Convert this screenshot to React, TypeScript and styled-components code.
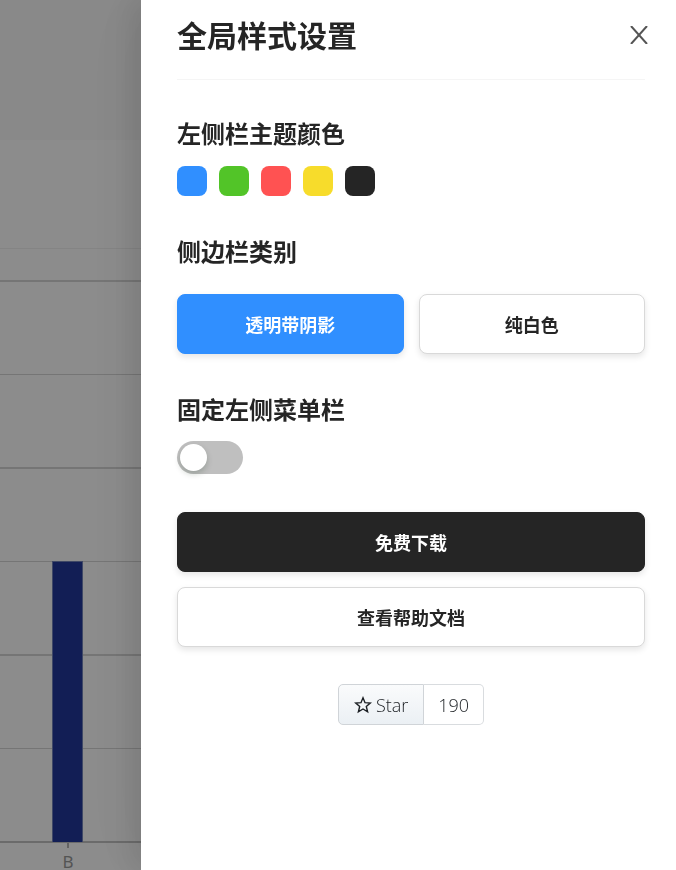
import React, { useState } from "react";
import styled, { createGlobalStyle } from "styled-components";

const GlobalStyle = createGlobalStyle`
  *, *::before, *::after { box-sizing: border-box; }
  body {
    margin: 0;
    background: #fafafa;
    color: #252525;
    font-family: "Open Sans", "Noto Sans CJK SC", sans-serif;
  }
  button { font-family: inherit; cursor: pointer; }
`;

const Page = styled.main`
  height: 100vh;
  padding-top: 140px;
  overflow: hidden;
`;

const ChartCard = styled.section`
  padding-top: 108px;
  background: #ffffff;
`;

const ChartArea = styled.div`
  border-top: 1px solid #f0f0f0;
`;

const Chart = styled.svg`
  display: block;
  width: 100%;
  height: 640px;
`;

const Mask = styled.div`
  position: fixed;
  inset: 0;
  display: flex;
  justify-content: flex-end;
  background: rgba(0, 0, 0, 0.45);
`;

const Drawer = styled.aside`
  position: relative;
  width: 535px;
  max-width: 100%;
  padding: 18px 31px 36px 36px;
  overflow: auto;
  background: #ffffff;
  box-shadow:
    -9px 0 24px rgba(0, 0, 0, 0.08),
    -14px 0 42px rgba(0, 0, 0, 0.05),
    -18px 0 72px rgba(0, 0, 0, 0.03);
`;

const DrawerHeader = styled.header`
  padding-bottom: 25px;
  margin-bottom: 36px;
  border-bottom: 1px solid #f5f5f5;
`;

const Title = styled.h1`
  margin: 0;
  font-size: 30px;
  line-height: 36px;
  font-weight: 700;
`;

const CloseButton = styled.button`
  position: absolute;
  top: 20px;
  right: 22px;
  display: grid;
  place-items: center;
  width: 30px;
  height: 30px;
  padding: 0;
  border: 0;
  background: none;
  color: #555555;
`;

const Section = styled.section`
  margin-bottom: 38px;
`;

const SectionTitle = styled.h2<{ $gap: number }>`
  margin: 0 0 ${(p) => p.$gap}px;
  font-size: 24px;
  line-height: 36px;
  font-weight: 700;
`;

const Swatches = styled.div`
  display: flex;
  gap: 12px;
`;

const Swatch = styled.button<{ $color: string }>`
  width: 30px;
  height: 30px;
  padding: 0;
  border: 0;
  border-radius: 8px;
  background: ${(p) => p.$color};
`;

const Choices = styled.div`
  display: grid;
  grid-template-columns: 1fr 1fr;
  gap: 15px;
`;

const Actions = styled.div`
  display: grid;
  gap: 15px;
  margin-bottom: 37px;
`;

type Tone = "primary" | "dark" | "outline";

const tones: Record<Tone, { bg: string; fg: string; line: string }> = {
  primary: { bg: "#308fff", fg: "#ffffff", line: "#308fff" },
  dark: { bg: "#252525", fg: "#ffffff", line: "#252525" },
  outline: { bg: "#ffffff", fg: "#252525", line: "#d9d9d9" },
};

const ActionButton = styled.button<{ $tone: Tone }>`
  height: 60px;
  padding: 2px 16px 0;
  border: 1px solid ${(p) => tones[p.$tone].line};
  border-radius: 8px;
  background: ${(p) => tones[p.$tone].bg};
  color: ${(p) => tones[p.$tone].fg};
  font-size: 18px;
  line-height: 24px;
  font-weight: 700;
  box-shadow: 0 3px 6px rgba(0, 0, 0, 0.1);
`;

const Switch = styled.input`
  appearance: none;
  display: block;
  width: 66px;
  height: 33px;
  margin: 0;
  padding: 3px;
  border-radius: 17px;
  background: #bfbfbf;
  cursor: pointer;

  &::before {
    content: "";
    display: block;
    width: 27px;
    height: 27px;
    border-radius: 50%;
    background: #ffffff;
    box-shadow: 0 3px 6px rgba(0, 35, 11, 0.2);
  }
  &:checked { background: #308fff; }
  &:checked::before { margin-left: auto; }
`;

const StarRow = styled.div`
  display: flex;
  justify-content: center;
`;

const StarLink = styled.a`
  display: flex;
  align-items: center;
  gap: 4px;
  height: 41px;
  padding: 0 15px;
  border: 1px solid #d0d4d8;
  border-radius: 5px 0 0 5px;
  background: linear-gradient(#fafbfc, #ebf0f4);
  color: #1b1f23;
  font-size: 18px;
  font-weight: 300;
  text-decoration: none;
`;

const CountLink = styled(StarLink)`
  padding: 0 14px;
  border-color: #d9dcdf;
  border-left: 0;
  border-radius: 0 5px 5px 0;
  background: #ffffff;
`;

const gridLines = [
  { y: 32, width: 2 },
  { y: 125.5, width: 1 },
  { y: 219, width: 2 },
  { y: 312.5, width: 1 },
  { y: 406, width: 2 },
  { y: 499.5, width: 1 },
];

const swatches = [
  { name: "蓝色", color: "#308fff" },
  { name: "绿色", color: "#52c428" },
  { name: "红色", color: "#ff5252" },
  { name: "黄色", color: "#f7dc2b" },
  { name: "黑色", color: "#252525" },
];

function BarChart() {
  return (
    <Chart aria-label="B">
      {gridLines.map((l) => (
        <line key={l.y} x1="0" x2="100%" y1={l.y} y2={l.y} stroke="#d6d6d6" strokeWidth={l.width} />
      ))}
      <line x1="0" x2="100%" y1="593" y2="593" stroke="#c4c4c4" strokeWidth="2" />
      <rect x="52" y="312" width="31" height="281" fill="#7384bb" />
      <rect x="53" y="313" width="29" height="280" fill="#22389b" />
      <line x1="68" x2="68" y1="594" y2="599" stroke="#b4b4b4" strokeWidth="2" />
      <text x="68" y="619" textAnchor="middle" fontSize="17" fontFamily="Noto Sans" fill="#999999">B</text>
    </Chart>
  );
}

export default function App() {
  const [kind, setKind] = useState(0);
  const [fixed, setFixed] = useState(false);

  return (
    <>
      <GlobalStyle />
      <Page>
        <ChartCard>
          <ChartArea>
            <BarChart />
          </ChartArea>
        </ChartCard>
      </Page>
      <Mask>
        <Drawer>
          <DrawerHeader>
            <Title>全局样式设置</Title>
            <CloseButton aria-label="关闭">
              <svg width="18" height="18" viewBox="0 0 18 18" fill="none" stroke="currentColor" strokeWidth="2">
                <path d="M1 0L17 18M17 0L1 18" />
              </svg>
            </CloseButton>
          </DrawerHeader>

          <Section>
            <SectionTitle $gap={14}>左侧栏主题颜色</SectionTitle>
            <Swatches>
              {swatches.map((s) => (
                <Swatch key={s.color} $color={s.color} aria-label={s.name} />
              ))}
            </Swatches>
          </Section>

          <Section>
            <SectionTitle $gap={24}>侧边栏类别</SectionTitle>
            <Choices>
              {["透明带阴影", "纯白色"].map((label, i) => (
                <ActionButton
                  key={label}
                  $tone={kind === i ? "primary" : "outline"}
                  aria-pressed={kind === i}
                  onClick={() => setKind(i)}
                >
                  {label}
                </ActionButton>
              ))}
            </Choices>
          </Section>

          <Section>
            <SectionTitle $gap={13}>
              <label htmlFor="fixed-menu">固定左侧菜单栏</label>
            </SectionTitle>
            <Switch
              id="fixed-menu"
              type="checkbox"
              role="switch"
              checked={fixed}
              onChange={(e) => setFixed(e.target.checked)}
            />
          </Section>

          <Actions>
            <ActionButton $tone="dark">免费下载</ActionButton>
            <ActionButton $tone="outline">查看帮助文档</ActionButton>
          </Actions>

          <StarRow>
            <StarLink href="#star">
              <svg width="18" height="18" viewBox="0 0 18 18" fill="none" stroke="currentColor" strokeWidth="1.4" aria-hidden="true">
                <path d="M9 1.8L11 6.7L16.3 7L12.3 10.5L13.6 15.8L9 13L4.4 15.8L5.7 10.5L1.7 7L7 6.7Z" />
              </svg>
              Star
            </StarLink>
            <CountLink href="#stargazers">190</CountLink>
          </StarRow>
        </Drawer>
      </Mask>
    </>
  );
}
